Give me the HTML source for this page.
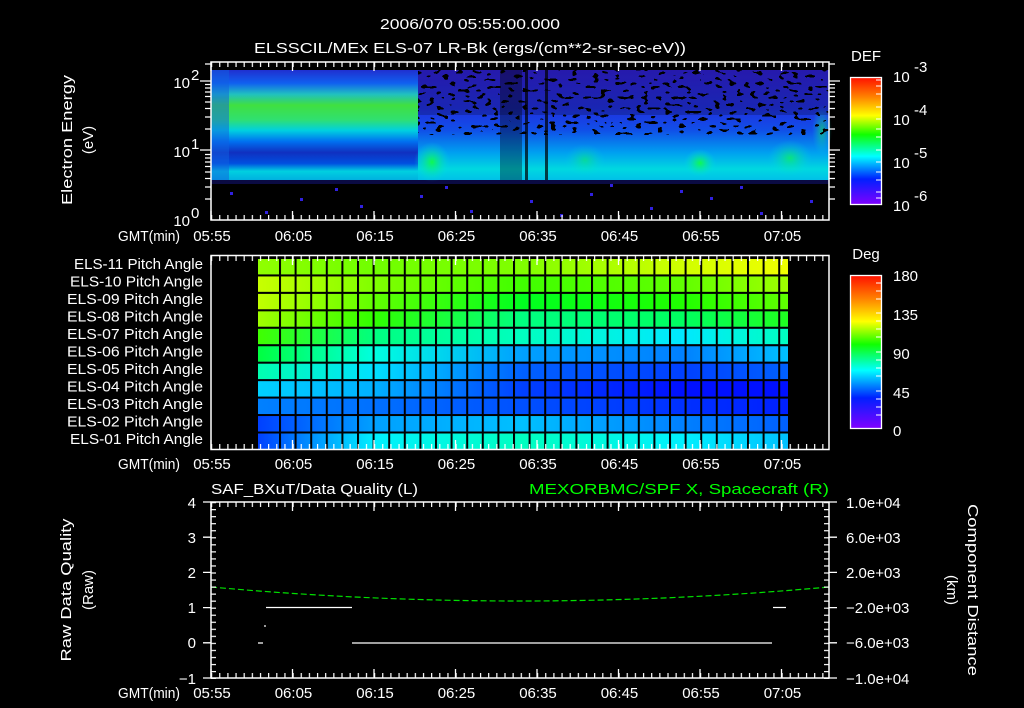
<!DOCTYPE html>
<html><head><meta charset="utf-8"><style>
html,body{margin:0;padding:0;background:#000;}
svg{display:block;}
text{font-family:"Liberation Sans",sans-serif;fill:#fff;font-size:15px;}
</style></head><body>
<svg width="1024" height="708" viewBox="0 0 1024 708" xmlns="http://www.w3.org/2000/svg">
<defs>
<filter id="spk" x="0" y="0" width="1" height="1">
<feTurbulence type="fractalNoise" baseFrequency="0.14 0.28" numOctaves="1" seed="3" result="n"/>
<feColorMatrix in="n" type="matrix" values="0 0 0 0 0  0 0 0 0 0  0 0 0 0 0  1 0 0 0 0"/>
<feComponentTransfer><feFuncA type="discrete" tableValues="0 0 0 0 0 1 1 1"/></feComponentTransfer>
</filter>
<filter id="spk2" x="0" y="0" width="1" height="1">
<feTurbulence type="fractalNoise" baseFrequency="0.14 0.28" numOctaves="1" seed="7" result="n"/>
<feColorMatrix in="n" type="matrix" values="0 0 0 0 0  0 0 0 0 0  0 0 0 0 0  1 0 0 0 0"/>
<feComponentTransfer><feFuncA type="discrete" tableValues="0 0 0 0 0 0 0 1"/></feComponentTransfer>
</filter>
<pattern id="tx" x="211" y="0" width="8.15" height="20" patternUnits="userSpaceOnUse"><rect x="0" y="0" width="1.2" height="20" fill="#fff"/></pattern>
<pattern id="ty" x="0" y="502" width="20" height="7.04" patternUnits="userSpaceOnUse"><rect x="0" y="0" width="20" height="1.2" fill="#fff"/></pattern>
<pattern id="gv" x="279" y="0" width="15.6" height="20" patternUnits="userSpaceOnUse"><rect x="0" y="0" width="2" height="20" fill="#000"/></pattern>
<pattern id="gh" x="0" y="257" width="20" height="17.45" patternUnits="userSpaceOnUse"><rect x="0" y="0" width="20" height="2" fill="#000"/></pattern>
<linearGradient id="cb" x1="0" y1="0" x2="0" y2="1">
<stop offset="0" stop-color="#ff1000"/><stop offset="0.15" stop-color="#ff8000"/><stop offset="0.3" stop-color="#ffff00"/><stop offset="0.45" stop-color="#10ff00"/><stop offset="0.62" stop-color="#00ffff"/><stop offset="0.8" stop-color="#0020ff"/><stop offset="1" stop-color="#8000ff"/></linearGradient>
<linearGradient id="sa" x1="0" y1="70" x2="0" y2="180" gradientUnits="userSpaceOnUse">
<stop offset="0" stop-color="#2030d0"/><stop offset="0.12" stop-color="#1060f0"/><stop offset="0.22" stop-color="#20c0c0"/><stop offset="0.32" stop-color="#40e040"/><stop offset="0.45" stop-color="#30e070"/><stop offset="0.55" stop-color="#00d0e0"/><stop offset="0.65" stop-color="#0070f0"/><stop offset="0.75" stop-color="#1030c0"/><stop offset="0.85" stop-color="#0050e0"/><stop offset="0.92" stop-color="#00d0e0"/><stop offset="1" stop-color="#00b0e0"/></linearGradient>
<linearGradient id="sb" x1="0" y1="70" x2="0" y2="180" gradientUnits="userSpaceOnUse">
<stop offset="0" stop-color="#3020d8"/><stop offset="0.35" stop-color="#2030e0"/><stop offset="0.55" stop-color="#1050e8"/><stop offset="0.75" stop-color="#00a0f0"/><stop offset="0.9" stop-color="#00d8e0"/><stop offset="1" stop-color="#00c0e8"/></linearGradient>
<radialGradient id="gb"><stop offset="0" stop-color="#10ff40" stop-opacity="0.9"/><stop offset="1" stop-color="#00e0e0" stop-opacity="0"/></radialGradient>
<linearGradient id="r11" x1="258" x2="788" gradientUnits="userSpaceOnUse"><stop offset="0" stop-color="#90ff00"/><stop offset="0.22" stop-color="#70ff00"/><stop offset="0.5" stop-color="#80ff00"/><stop offset="0.8" stop-color="#d0ff00"/><stop offset="1" stop-color="#f0ff00"/></linearGradient>
<linearGradient id="r10" x1="258" x2="788" gradientUnits="userSpaceOnUse"><stop offset="0" stop-color="#c8ff00"/><stop offset="0.22" stop-color="#80ff00"/><stop offset="0.5" stop-color="#40ff00"/><stop offset="0.8" stop-color="#60ff00"/><stop offset="1" stop-color="#a0ff00"/></linearGradient>
<linearGradient id="r9" x1="258" x2="788" gradientUnits="userSpaceOnUse"><stop offset="0" stop-color="#c0ff00"/><stop offset="0.22" stop-color="#60ff00"/><stop offset="0.5" stop-color="#00ff20"/><stop offset="0.8" stop-color="#20ff00"/><stop offset="1" stop-color="#60ff00"/></linearGradient>
<linearGradient id="r8" x1="258" x2="788" gradientUnits="userSpaceOnUse"><stop offset="0" stop-color="#a0ff00"/><stop offset="0.22" stop-color="#30ff00"/><stop offset="0.5" stop-color="#00ff80"/><stop offset="0.8" stop-color="#00ff60"/><stop offset="1" stop-color="#20ff20"/></linearGradient>
<linearGradient id="r7" x1="258" x2="788" gradientUnits="userSpaceOnUse"><stop offset="0" stop-color="#40ff00"/><stop offset="0.22" stop-color="#00ff80"/><stop offset="0.5" stop-color="#00ffc0"/><stop offset="0.8" stop-color="#00e8ff"/><stop offset="1" stop-color="#00ffc0"/></linearGradient>
<linearGradient id="r6" x1="258" x2="788" gradientUnits="userSpaceOnUse"><stop offset="0" stop-color="#00ff40"/><stop offset="0.22" stop-color="#00ffe0"/><stop offset="0.5" stop-color="#00a0ff"/><stop offset="0.8" stop-color="#0080ff"/><stop offset="1" stop-color="#00c0ff"/></linearGradient>
<linearGradient id="r5" x1="258" x2="788" gradientUnits="userSpaceOnUse"><stop offset="0" stop-color="#00ffb0"/><stop offset="0.22" stop-color="#00e0ff"/><stop offset="0.5" stop-color="#0060ff"/><stop offset="0.8" stop-color="#0040ff"/><stop offset="1" stop-color="#0060ff"/></linearGradient>
<linearGradient id="r4" x1="258" x2="788" gradientUnits="userSpaceOnUse"><stop offset="0" stop-color="#00d0ff"/><stop offset="0.22" stop-color="#00b0ff"/><stop offset="0.5" stop-color="#0040ff"/><stop offset="0.8" stop-color="#0010ff"/><stop offset="1" stop-color="#0010ff"/></linearGradient>
<linearGradient id="r3" x1="258" x2="788" gradientUnits="userSpaceOnUse"><stop offset="0" stop-color="#0080ff"/><stop offset="0.22" stop-color="#0070ff"/><stop offset="0.5" stop-color="#0050ff"/><stop offset="0.8" stop-color="#0030ff"/><stop offset="1" stop-color="#0020ff"/></linearGradient>
<linearGradient id="r2" x1="258" x2="788" gradientUnits="userSpaceOnUse"><stop offset="0" stop-color="#0040ff"/><stop offset="0.22" stop-color="#00a0ff"/><stop offset="0.5" stop-color="#00c0ff"/><stop offset="0.8" stop-color="#0080ff"/><stop offset="1" stop-color="#0060ff"/></linearGradient>
<linearGradient id="r1" x1="258" x2="788" gradientUnits="userSpaceOnUse"><stop offset="0" stop-color="#0040ff"/><stop offset="0.22" stop-color="#00f0ff"/><stop offset="0.5" stop-color="#00ffc0"/><stop offset="0.8" stop-color="#00f0ff"/><stop offset="1" stop-color="#00c0ff"/></linearGradient>
</defs>

<!-- Titles -->
<text x="470" y="29" text-anchor="middle" font-size="18" textLength="180" lengthAdjust="spacingAndGlyphs">2006/070 05:55:00.000</text>
<text x="470" y="53" text-anchor="middle" font-size="18" textLength="432" lengthAdjust="spacingAndGlyphs">ELSSCIL/MEx ELS-07 LR-Bk  (ergs/(cm**2-sr-sec-eV))</text>

<!-- Panel 1 spectrogram -->
<rect x="211" y="70" width="207" height="110" fill="url(#sa)"/>
<rect x="211" y="70" width="18" height="110" fill="#1060e0" opacity="0.5"/>
<rect x="418" y="70" width="411" height="110" fill="url(#sb)"/>
<ellipse cx="432" cy="162" rx="18" ry="20" fill="url(#gb)"/>
<ellipse cx="700" cy="163" rx="16" ry="14" fill="url(#gb)"/>
<ellipse cx="790" cy="158" rx="22" ry="18" fill="url(#gb)" opacity="0.7"/>
<ellipse cx="822" cy="130" rx="10" ry="25" fill="url(#gb)" opacity="0.6"/>
<ellipse cx="585" cy="160" rx="20" ry="16" fill="url(#gb)" opacity="0.5"/>
<!-- speckle holes -->
<rect x="418" y="70" width="411" height="65" filter="url(#spk)"/>
<rect x="418" y="130" width="411" height="50" filter="url(#spk2)"/>
<rect x="211" y="70" width="207" height="110" filter="url(#spk2)" opacity="0.7"/>
<rect x="418" y="70" width="411" height="45" fill="#000" opacity="0.2"/>
<rect x="500" y="70" width="22" height="110" fill="#000" opacity="0.35"/>
<rect x="525" y="70" width="3" height="110" fill="#000" opacity="0.7"/>
<rect x="545" y="70" width="3" height="110" fill="#000" opacity="0.7"/>
<rect x="211" y="180" width="618" height="4" fill="#2020c0" opacity="0.35"/>
<g fill="#3020e0">
<rect x="230" y="192" width="3" height="3"/><rect x="300" y="198" width="3" height="3"/><rect x="360" y="205" width="3" height="3"/><rect x="420" y="195" width="3" height="3"/><rect x="470" y="210" width="3" height="3"/><rect x="530" y="200" width="3" height="3"/><rect x="590" y="193" width="3" height="3"/><rect x="650" y="207" width="3" height="3"/><rect x="710" y="197" width="3" height="3"/><rect x="760" y="212" width="3" height="3"/><rect x="810" y="200" width="3" height="3"/><rect x="265" y="211" width="3" height="3"/><rect x="335" y="188" width="3" height="3"/><rect x="560" y="214" width="3" height="3"/><rect x="680" y="190" width="3" height="3"/><rect x="445" y="186" width="3" height="3"/><rect x="610" y="184" width="3" height="3"/><rect x="740" y="186" width="3" height="3"/>
</g>
<!-- Panel 1 frame & ticks -->
<rect x="211" y="62" width="618" height="158" fill="none" stroke="#fff" stroke-width="1.5"/>
<rect x="211" y="62" width="619" height="5" fill="url(#tx)"/>
<rect x="211" y="215" width="619" height="5" fill="url(#tx)"/>
<g stroke="#fff" stroke-width="1.3">
<path d="M211 62v9M292.5 62v9M374 62v9M455.5 62v9M537 62v9M618.5 62v9M700 62v9M781.5 62v9M211 220v-9M292.5 220v-9M374 220v-9M455.5 220v-9M537 220v-9M618.5 220v-9M700 220v-9M781.5 220v-9"/>
<path d="M200 81h11M200 150h11M205 199h6M205 187h6M205 178.5h6M205 172h6M205 166.5h6M205 162h6M205 158h6M205 154.5h6M205 129h6M205 117h6M205 108.5h6M205 102h6M205 96.5h6M205 92h6M205 88h6M205 84.5h6M205 64h6"/>
<path d="M829 81h11M829 150h11M829 199h6M829 187h6M829 178.5h6M829 172h6M829 166.5h6M829 162h6M829 158h6M829 154.5h6M829 129h6M829 117h6M829 108.5h6M829 102h6M829 96.5h6M829 92h6M829 88h6M829 84.5h6M829 64h6"/>
</g>
<text x="190" y="88" text-anchor="end" font-size="16">10</text><text x="191" y="80" font-size="11">2</text>
<text x="190" y="157" text-anchor="end" font-size="16">10</text><text x="191" y="149" font-size="11">1</text>
<text x="190" y="226" text-anchor="end" font-size="16">10</text><text x="191" y="218" font-size="11">0</text>
<text transform="translate(72,140) rotate(-90)" text-anchor="middle" font-size="17" textLength="130" lengthAdjust="spacingAndGlyphs">Electron Energy</text>
<text transform="translate(93,140) rotate(-90)" text-anchor="middle" font-size="17">(eV)</text>

<!-- Colorbar 1 -->
<text x="866" y="61" text-anchor="middle" font-size="18">DEF</text>
<rect x="850.5" y="77.5" width="31" height="127" fill="url(#cb)" stroke="#fff" stroke-width="1.3"/>
<g stroke="#fff" stroke-width="1"><path d="M876 80h5M876 86h5M876 94h5M876 107h5M876 119h5M876 129h5M876 137h5M876 150h5M876 162h5M876 172h5M876 180h5M876 192h5M876 198h5"/></g>
<text x="893" y="82" font-size="18">10</text><text x="914" y="72" font-size="13">-3</text>
<text x="893" y="125" font-size="18">10</text><text x="914" y="115" font-size="13">-4</text>
<text x="893" y="168" font-size="18">10</text><text x="914" y="158" font-size="13">-5</text>
<text x="893" y="211" font-size="18">10</text><text x="914" y="201" font-size="13">-6</text>

<!-- Time labels -->
<g font-size="15">
<text x="118" y="241" textLength="62" lengthAdjust="spacingAndGlyphs">GMT(min)</text>
<text x="118" y="469" textLength="62" lengthAdjust="spacingAndGlyphs">GMT(min)</text>
<text x="118" y="698" textLength="62" lengthAdjust="spacingAndGlyphs">GMT(min)</text>
</g>
<g text-anchor="middle" font-size="15">
<text x="212" y="241">05:55</text><text x="293.5" y="241">06:05</text><text x="375" y="241">06:15</text><text x="456.5" y="241">06:25</text><text x="538" y="241">06:35</text><text x="619.5" y="241">06:45</text><text x="701" y="241">06:55</text><text x="782.5" y="241">07:05</text>
<text x="212" y="469">05:55</text><text x="293.5" y="469">06:05</text><text x="375" y="469">06:15</text><text x="456.5" y="469">06:25</text><text x="538" y="469">06:35</text><text x="619.5" y="469">06:45</text><text x="701" y="469">06:55</text><text x="782.5" y="469">07:05</text>
<text x="212" y="698">05:55</text><text x="293.5" y="698">06:05</text><text x="375" y="698">06:15</text><text x="456.5" y="698">06:25</text><text x="538" y="698">06:35</text><text x="619.5" y="698">06:45</text><text x="701" y="698">06:55</text><text x="782.5" y="698">07:05</text>
</g>

<!-- Panel 2 -->
<rect x="258" y="257" width="530" height="17.45" fill="url(#r11)"/>
<rect x="258" y="274.45" width="530" height="17.45" fill="url(#r10)"/>
<rect x="258" y="291.9" width="530" height="17.45" fill="url(#r9)"/>
<rect x="258" y="309.35" width="530" height="17.45" fill="url(#r8)"/>
<rect x="258" y="326.8" width="530" height="17.45" fill="url(#r7)"/>
<rect x="258" y="344.25" width="530" height="17.45" fill="url(#r6)"/>
<rect x="258" y="361.7" width="530" height="17.45" fill="url(#r5)"/>
<rect x="258" y="379.15" width="530" height="17.45" fill="url(#r4)"/>
<rect x="258" y="396.6" width="530" height="17.45" fill="url(#r3)"/>
<rect x="258" y="414.05" width="530" height="17.45" fill="url(#r2)"/>
<rect x="258" y="431.5" width="530" height="18" fill="url(#r1)"/>
<rect x="279" y="257" width="509" height="192" fill="url(#gv)"/>
<rect x="258" y="257" width="530" height="192" fill="url(#gh)"/>
<rect x="211" y="255.5" width="618" height="194" fill="none" stroke="#fff" stroke-width="1.5"/>
<rect x="211" y="256" width="619" height="5" fill="url(#tx)"/>
<rect x="211" y="444" width="619" height="5" fill="url(#tx)"/>
<g stroke="#fff" stroke-width="1.3"><path d="M211 256v9M292.5 256v9M374 256v9M455.5 256v9M537 256v9M618.5 256v9M700 256v9M781.5 256v9M211 449v-9M292.5 449v-9M374 449v-9M455.5 449v-9M537 449v-9M618.5 449v-9M700 449v-9M781.5 449v-9"/></g>
<g text-anchor="end" font-size="14">
<text x="203" y="269" textLength="129" lengthAdjust="spacingAndGlyphs">ELS-11 Pitch Angle</text>
<text x="203" y="286.5" textLength="133" lengthAdjust="spacingAndGlyphs">ELS-10 Pitch Angle</text>
<text x="203" y="304" textLength="136" lengthAdjust="spacingAndGlyphs">ELS-09 Pitch Angle</text>
<text x="203" y="321.5" textLength="136" lengthAdjust="spacingAndGlyphs">ELS-08 Pitch Angle</text>
<text x="203" y="339" textLength="136" lengthAdjust="spacingAndGlyphs">ELS-07 Pitch Angle</text>
<text x="203" y="356.5" textLength="136" lengthAdjust="spacingAndGlyphs">ELS-06 Pitch Angle</text>
<text x="203" y="374" textLength="136" lengthAdjust="spacingAndGlyphs">ELS-05 Pitch Angle</text>
<text x="203" y="391.5" textLength="136" lengthAdjust="spacingAndGlyphs">ELS-04 Pitch Angle</text>
<text x="203" y="409" textLength="136" lengthAdjust="spacingAndGlyphs">ELS-03 Pitch Angle</text>
<text x="203" y="426.5" textLength="136" lengthAdjust="spacingAndGlyphs">ELS-02 Pitch Angle</text>
<text x="203" y="444" textLength="133" lengthAdjust="spacingAndGlyphs">ELS-01 Pitch Angle</text>
</g>
<!-- Colorbar 2 -->
<text x="866" y="259" text-anchor="middle" font-size="18">Deg</text>
<rect x="850.5" y="275.5" width="31" height="153" fill="url(#cb)" stroke="#fff" stroke-width="1.3"/>
<g stroke="#fff" stroke-width="1"><path d="M876 283h5M876 291h5M876 299h5M876 313h5M876 321h5M876 329h5M876 337h5M876 352h5M876 360h5M876 368h5M876 376h5M876 391h5M876 399h5M876 407h5M876 415h5"/></g>
<g font-size="18"><text x="893" y="281">180</text><text x="893" y="320">135</text><text x="893" y="359">90</text><text x="893" y="398">45</text><text x="893" y="436">0</text></g>

<!-- Panel 3 -->
<text x="211" y="494" font-size="16" textLength="207" lengthAdjust="spacingAndGlyphs">SAF_BXuT/Data Quality (L)</text>
<text x="829" y="494" font-size="16" text-anchor="end" style="fill:#00ff00" textLength="300" lengthAdjust="spacingAndGlyphs">MEXORBMC/SPF X, Spacecraft (R)</text>
<path d="M211 587 Q520 615 829 587" fill="none" stroke="#00e000" stroke-width="1.2" stroke-dasharray="6 3"/>
<g stroke="#fff" stroke-width="1.2">
<path d="M266 607.5h86M352 643h420M258 643h5M773 607.5h13M265 625v2"/>
</g>
<rect x="211" y="502" width="618" height="176" fill="none" stroke="#fff" stroke-width="1.5"/>
<rect x="211" y="502" width="619" height="5" fill="url(#tx)"/>
<rect x="211" y="673" width="619" height="5" fill="url(#tx)"/>
<rect x="211" y="502" width="5" height="177" fill="url(#ty)"/>
<rect x="824" y="502" width="5" height="177" fill="url(#ty)"/>
<g stroke="#fff" stroke-width="1.3"><path d="M211 502v9M292.5 502v9M374 502v9M455.5 502v9M537 502v9M618.5 502v9M700 502v9M781.5 502v9M211 678v-9M292.5 678v-9M374 678v-9M455.5 678v-9M537 678v-9M618.5 678v-9M700 678v-9M781.5 678v-9M203 502h8M203 537.2h8M203 572.4h8M203 607.6h8M203 642.8h8M203 678h8M829 502h8M829 537.2h8M829 572.4h8M829 607.6h8M829 642.8h8M829 678h8"/></g>
<g text-anchor="end" font-size="15"><text x="196" y="508">4</text><text x="196" y="543">3</text><text x="196" y="578">2</text><text x="196" y="613">1</text><text x="196" y="648">0</text><text x="196" y="684">−1</text></g>
<g font-size="15"><text x="846" y="508">1.0e+04</text><text x="846" y="543">6.0e+03</text><text x="846" y="578">2.0e+03</text><text x="846" y="613">−2.0e+03</text><text x="846" y="648">−6.0e+03</text><text x="846" y="684">−1.0e+04</text></g>
<text transform="translate(71,590) rotate(-90)" text-anchor="middle" font-size="17" textLength="143" lengthAdjust="spacingAndGlyphs">Raw Data Quality</text>
<text transform="translate(93,590) rotate(-90)" text-anchor="middle" font-size="17">(Raw)</text>
<text transform="translate(968,590) rotate(90)" text-anchor="middle" font-size="17" textLength="172" lengthAdjust="spacingAndGlyphs">Component Distance</text>
<text transform="translate(947,590) rotate(90)" text-anchor="middle" font-size="17">(km)</text>
</svg>
</body></html>
